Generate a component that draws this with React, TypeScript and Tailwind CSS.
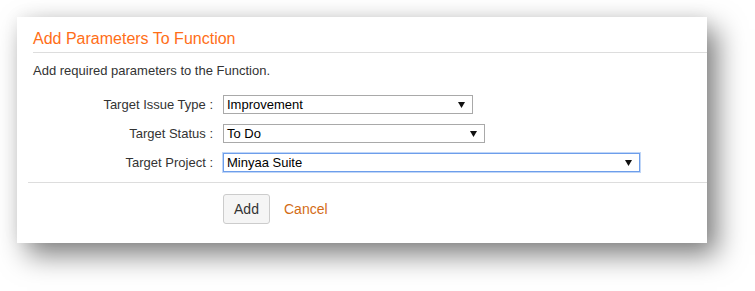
import React from "react";

function FakeSelect({ value, width, focused }: { value: string; width: string; focused?: boolean }) {
  return (
    <div
      className={
        "relative flex h-[19px] items-center bg-white pl-[3px] text-[13px] text-black " +
        width +
        (focused
          ? " border border-[#6d9eeb] shadow-[0_0_0_1px_rgba(140,180,240,0.55)]"
          : " border border-[#a9a9a9]")
      }
    >
      <span className="leading-[17px]">{value}</span>
      <svg className="absolute right-[7px] top-[6px]" width="7" height="6" viewBox="0 0 7 6">
        <path d="M0 0 L7 0 L3.5 6 Z" fill="#111" />
      </svg>
    </div>
  );
}

function Row({ label, children }: { label: string; children: React.ReactNode }) {
  return (
    <div className="flex items-center gap-[10px]">
      <div className="w-[196px] text-right text-[13px] leading-[19px] text-[#333]">{label}</div>
      {children}
    </div>
  );
}

export default function App() {
  return (
    <div
      className="min-h-[291px] w-[755px] bg-white pl-[17px] pt-[17px]"
      style={{ fontFamily: '"Liberation Sans", Arial, sans-serif' }}
    >
      <div className="h-[226px] w-[690px] bg-white pt-[12px] shadow-[10px_12px_26px_rgba(0,0,0,0.5),0_-2px_16px_rgba(0,0,0,0.05)]">
        <div className="ml-[16px] border-b border-[#dddddd] pb-[3px]">
          <h2 className="text-[16px] leading-[20px] font-normal text-[#ff6e17]">Add Parameters To Function</h2>
        </div>
        <p className="ml-[16px] mt-[10px] text-[13px] leading-[16px] text-[#333]">
          Add required parameters to the Function.
        </p>
        <div className="mt-[16px] flex flex-col gap-[10px]">
          <Row label="Target Issue Type :">
            <FakeSelect value="Improvement" width="w-[250px]" />
          </Row>
          <Row label="Target Status :">
            <FakeSelect value="To Do" width="w-[262px]" />
          </Row>
          <Row label="Target Project :">
            <FakeSelect value="Minyaa Suite" width="w-[417px]" focused />
          </Row>
        </div>
        <div className="ml-[11px] mt-[10px] border-t border-[#dddddd]" />
        <div className="ml-[206px] mt-[11px] flex items-center gap-[14px]">
          <button className="h-[30px] w-[47px] rounded-[3px] border border-[#cccccc] bg-[#f5f5f5] text-[14px] text-[#333]">
            Add
          </button>
          <a className="text-[14px] text-[#d36c16]">Cancel</a>
        </div>
      </div>
    </div>
  );
}
